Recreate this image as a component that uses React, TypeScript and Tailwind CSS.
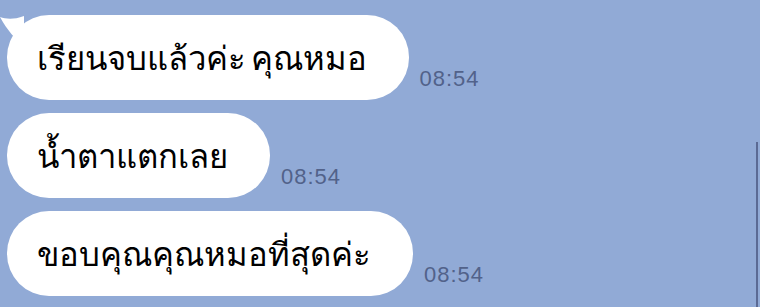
const messages = [
  { text: 'เรียนจบแล้วค่ะ คุณหมอ', time: '08:54', tail: true },
  { text: 'น้ำตาแตกเลย', time: '08:54', tail: false },
  { text: 'ขอบคุณคุณหมอที่สุดค่ะ', time: '08:54', tail: false },
]

export default function App() {
  return (
    <div className="relative w-[760px] h-[307px] overflow-hidden bg-[#91aad6] pt-[15px] pl-[7px] flex flex-col gap-[13px]">
      {messages.map((m, i) => (
        <div key={i} className="flex items-end">
          <div className="relative">
            {m.tail && (
              <svg className="absolute -left-[7px] top-[1px]" width="26" height="30" viewBox="0 0 26 30">
                <path d="M0 1 C6 3 13 4 24 0 L24 30 C16 24 7 14 0 1 Z" fill="#ffffff" />
              </svg>
            )}
            <div className="relative h-[85px] bg-white rounded-[42px] pl-[30px] pr-[42px] flex items-center text-[32.8px] text-black [word-spacing:-4px] font-['Noto_Sans',sans-serif]">
              {m.text}
            </div>
          </div>
          <div className="ml-[11px] mb-[10px] text-[22px] leading-none tracking-[1px] text-[#52628a] font-['Liberation_Sans',sans-serif]">{m.time}</div>
        </div>
      ))}
      <div className="absolute right-[2px] top-[142px] bottom-0 w-[2px] bg-[#5b6a94]" />
    </div>
  )
}
